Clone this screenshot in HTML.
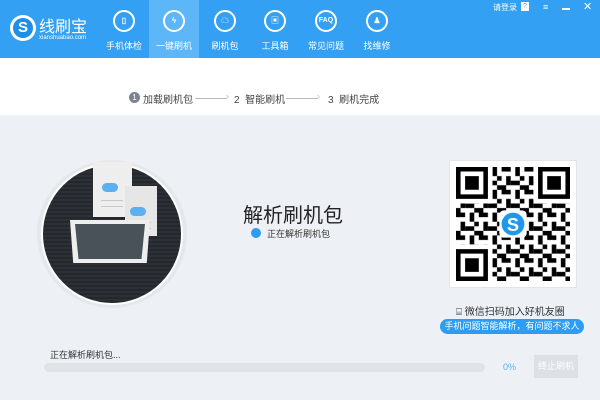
<!DOCTYPE html>
<html><head><meta charset="utf-8"><style>
*{margin:0;padding:0;box-sizing:border-box}
body{width:600px;height:400px;overflow:hidden;background:#edf1f5;font-family:"Liberation Sans","Noto Sans CJK SC",sans-serif;position:relative}
.hdr{position:absolute;left:0;top:0;width:600px;height:58px;background:#33a0f4}
.tab{position:absolute;top:0;width:50px;height:58px;color:#fff;font-size:9px;text-align:center}
.tab .ic{position:absolute;left:14px;top:10px;width:22px;height:22px;border:2px solid #fff;border-radius:50%;font-size:8px;font-weight:bold;line-height:18px}
.tab .lb{position:absolute;left:0;width:50px;top:39px}
.white{position:absolute;left:0;top:58px;width:600px;height:57px;background:#fff}
.abs{position:absolute}
.ln{position:absolute;height:1px;background:#c8c8c8}
</style></head><body>
<div class="hdr">
  <div class="abs" style="left:10px;top:15px;width:26px;height:26px;border-radius:50%;background:#fff;"></div>
  <div class="abs" style="left:13px;top:18px;width:20px;height:20px;border-radius:50%;background:#1e8ee6;color:#fff;font-weight:bold;font-size:15px;line-height:20px;text-align:center">S</div>
  <div class="abs" style="left:39px;top:13px;color:#fff;font-size:16px">线刷宝</div>
  <div class="abs" style="left:39px;top:35px;color:#fff;font-size:6px">xianshuabao.com</div>
  <div class="abs" style="left:149px;top:0;width:50px;height:58px;background:#5cb6f8"></div>
  <div class="tab" style="left:99px"><div class="ic">▯</div><div class="lb">手机体检</div></div>
  <div class="tab" style="left:149px"><div class="ic">ϟ</div><div class="lb">一键刷机</div></div>
  <div class="tab" style="left:200px"><div class="ic">☁</div><div class="lb">刷机包</div></div>
  <div class="tab" style="left:250px"><div class="ic">▣</div><div class="lb">工具箱</div></div>
  <div class="tab" style="left:301px"><div class="ic" style="font-size:7px">FAQ</div><div class="lb">常见问题</div></div>
  <div class="tab" style="left:352px"><div class="ic">♟</div><div class="lb">找维修</div></div>
  <div class="abs" style="left:493px;top:2px;color:#fff;font-size:8px">请登录</div>
  <div class="abs" style="left:521px;top:2px;width:8px;height:9px;background:#fff;color:#33a0f4;font-size:7px;text-align:center;line-height:9px">?</div>
  <div class="abs" style="left:543px;top:2px;color:#fff;font-size:9px">≡</div>
  <div class="abs" style="left:562px;top:8px;width:8px;height:1.5px;background:#fff"></div>
  <div class="abs" style="left:583px;top:0px;color:#fff;font-size:11px">✕</div>
</div>
<div class="white">
  <div class="abs" style="left:129px;top:34px;width:11px;height:11px;border-radius:50%;background:#7a8590;color:#fff;font-size:8px;text-align:center;line-height:11px">1</div>
  <div class="abs" style="left:143px;top:33px;font-size:10px;color:#444">加载刷机包</div>
  <div class="abs" style="left:195px;top:40px;width:32px;height:1px;background:#bbb"></div>
  <div class="abs" style="left:226px;top:33px;font-size:9px;color:#bbb">›</div>
  <div class="abs" style="left:234px;top:33px;font-size:10px;color:#444">2&nbsp; 智能刷机</div>
  <div class="abs" style="left:286px;top:40px;width:32px;height:1px;background:#bbb"></div>
  <div class="abs" style="left:317px;top:33px;font-size:9px;color:#bbb">›</div>
  <div class="abs" style="left:328px;top:33px;font-size:10px;color:#444">3&nbsp; 刷机完成</div>
</div>
<div class="abs" style="left:37px;top:160px;width:150px;height:148px;border-radius:50%;background:#e4e8ec"></div>
<div class="abs" style="left:41px;top:163px;width:142px;height:142px;border-radius:50%;background:repeating-linear-gradient(#24282d 0 2px,#2c3137 2px 4px);border:2px solid #fff"></div>
<div class="abs" style="left:93px;top:162px;width:39px;height:55px;background:#eeeeee"></div>
<div class="ln" style="left:101px;top:200px;width:22px"></div><div class="ln" style="left:101px;top:206px;width:22px"></div>
<div class="abs" style="left:125px;top:186px;width:32px;height:50px;background:#e6e6e6"></div>
<div class="ln" style="left:131px;top:222px;width:20px"></div><div class="ln" style="left:131px;top:228px;width:20px"></div>
<div class="abs" style="left:102px;top:183px;width:16px;height:9px;border-radius:5px;background:#5ab0f0"></div>
<div class="abs" style="left:130px;top:207px;width:16px;height:9px;border-radius:5px;background:#5ab0f0"></div>
<div class="abs" style="left:70px;top:220px;width:80px;height:43px;background:#eee;clip-path:polygon(0 0,100% 0,96% 100%,4% 100%)"></div>
<div class="abs" style="left:75px;top:224px;width:70px;height:35px;background:#4a5259;clip-path:polygon(0 0,100% 0,95% 100%,5% 100%)"></div>
<div class="abs" style="left:243px;top:199px;font-size:20px;color:#222">解析刷机包</div>
<div class="abs" style="left:251px;top:228px;width:10px;height:10px;border-radius:50%;background:#2d9cf4"></div>
<div class="abs" style="left:267px;top:227px;font-size:9px;color:#333">正在解析刷机包</div>
<div class="abs" style="left:449px;top:160px;width:128px;height:128px;background:#fff;border:1px solid #e2e6ea"></div>
<svg class="abs" style="left:456px;top:167px" width="114" height="114" viewBox="0 0 25 25">
<defs><pattern id="q" width="5" height="5" patternUnits="userSpaceOnUse">
<rect x="0" y="0" width="2" height="1"/><rect x="3" y="0" width="1" height="2"/><rect x="1" y="2" width="1" height="2"/><rect x="2" y="3" width="2" height="1"/><rect x="4" y="2" width="1" height="1"/><rect x="0" y="4" width="1" height="1"/><rect x="4" y="4" width="1" height="1"/></pattern></defs>
<rect width="25" height="25" fill="url(#q)"/>
<g><rect x="0" y="0" width="8" height="8" fill="#fff"/><rect x="17" y="0" width="8" height="8" fill="#fff"/><rect x="0" y="17" width="8" height="8" fill="#fff"/>
<path d="M0 0h7v7h-7zM1 1v5h5v-5zM2 2h3v3h-3z M18 0h7v7h-7zM19 1v5h5v-5zM20 2h3v3h-3z M0 18h7v7h-7zM1 19v5h5v-5zM2 20h3v3h-3z" fill-rule="evenodd"/>
<rect x="9.5" y="9.5" width="6" height="6" rx="1" fill="#fff"/><circle cx="12.5" cy="12.5" r="2.5" fill="#1e98ea"/><text x="12.5" y="14" font-size="4" fill="#fff" text-anchor="middle" font-weight="bold" font-family="Liberation Sans">S</text></g>
</svg>
<div class="abs" style="left:456px;top:303px;font-size:10px;color:#333">⌸ 微信扫码加入好机友圈</div>
<div class="abs" style="left:440px;top:319px;width:144px;height:15px;border-radius:8px;background:#2d9cf4;color:#fff;font-size:9px;text-align:center;line-height:15px">手机问题智能解析，有问题不求人</div>
<div class="abs" style="left:50px;top:348px;font-size:9px;color:#333">正在解析刷机包...</div>
<div class="abs" style="left:44px;top:363px;width:441px;height:9px;border-radius:5px;background:#dfe3e7"></div>
<div class="abs" style="left:503px;top:362px;font-size:9px;color:#5ab0f0">0%</div>
<div class="abs" style="left:534px;top:355px;width:44px;height:23px;background:#dde1e5;color:#fff;font-size:9px;text-align:center;line-height:23px">终止刷机</div>
</body></html>
